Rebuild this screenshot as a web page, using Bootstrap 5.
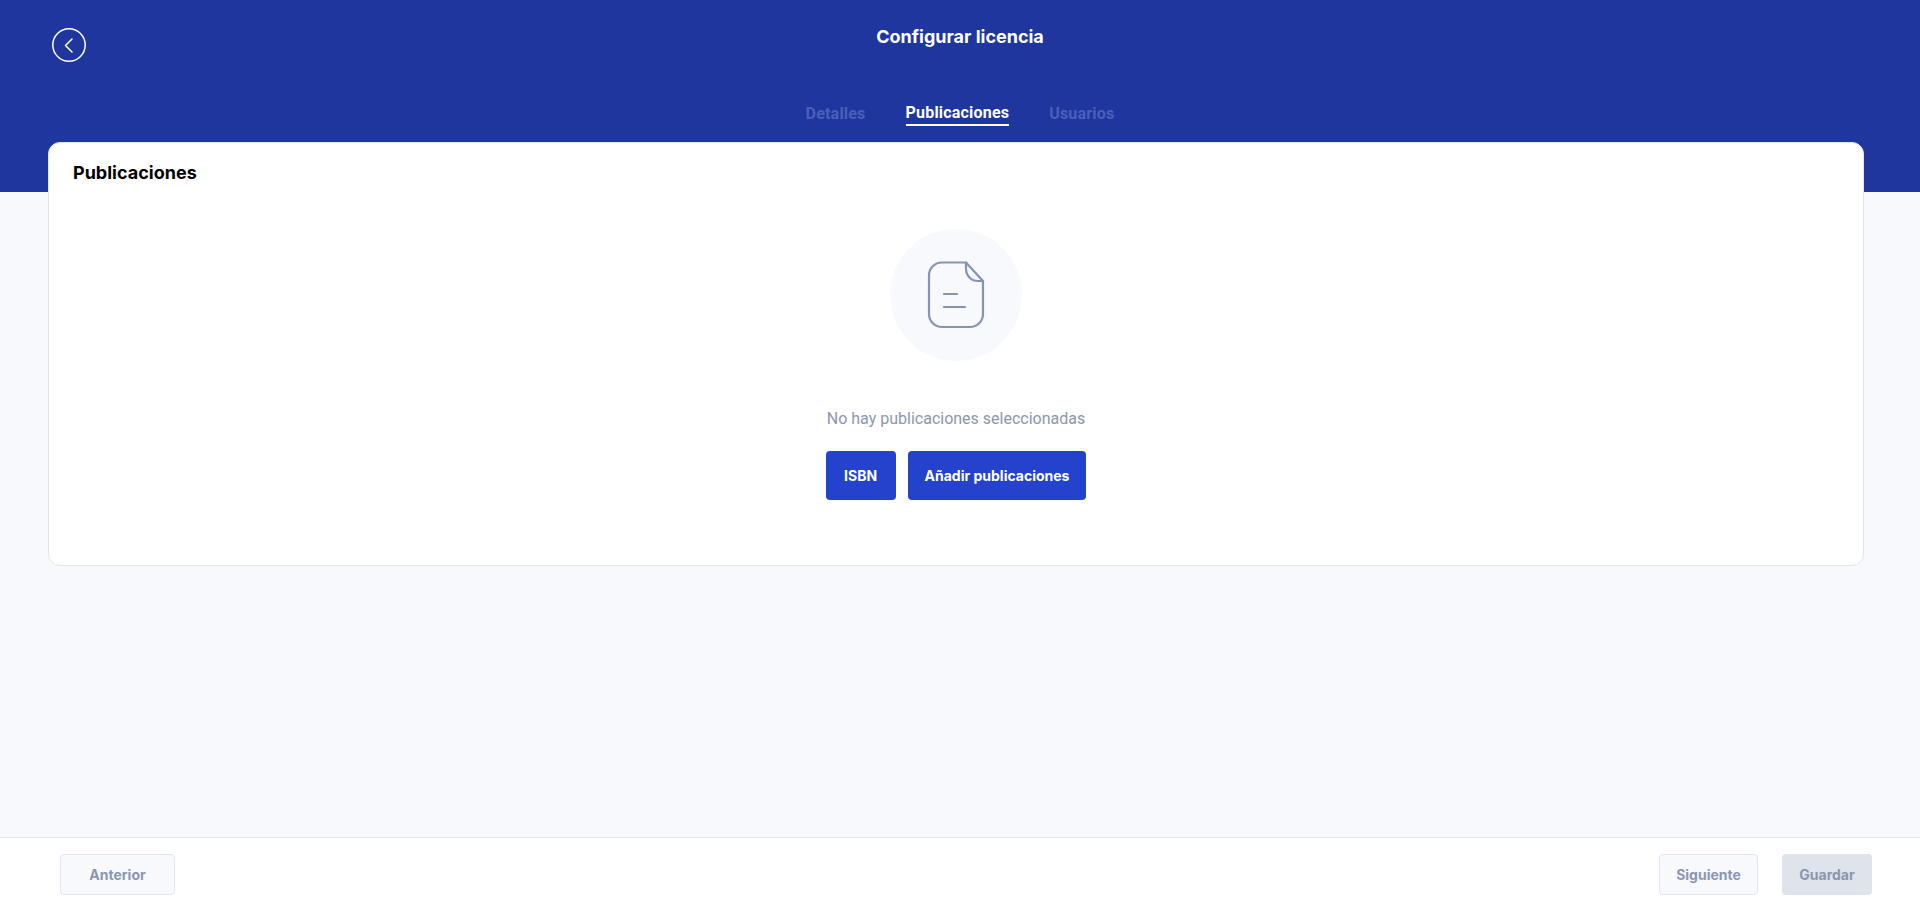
<!DOCTYPE html>
<html lang="es">
<head>
    <meta charset="UTF-8">
    <title>Configurar licencia</title>
    <link href="https://cdn.jsdelivr.net/npm/bootstrap@5.3.0/dist/css/bootstrap.min.css" rel="stylesheet">
    <style>
        html, body { height: 100%; }
        body { background: #f8f9fd; font-family: "Inter", "Liberation Sans", sans-serif; overflow: hidden; }
        .page-wrap { height: 910px; }
        .top-band { background: #1e369d; height: 192px; padding: 28px 52px 0; flex-shrink: 0; }
        .top-row { display: grid; grid-template-columns: 1fr auto 1fr; }
        .back-btn { width: 34px; height: 34px; border: 0; background: transparent; padding: 0; }
        .page-title { color: #fff; font-size: 18px; font-weight: 700; line-height: 22px; margin: -2px 0 0; }
        .tab-strip { gap: 40px; margin-top: 39px; }
        .tab-link { font-family: "Roboto", "Liberation Sans", sans-serif; font-size: 16px; font-weight: 700; letter-spacing: .2px; line-height: 20px; color: #4a60ba; text-decoration: none; padding: 3px 0 0; border-bottom: 2px solid transparent; }
        .tab-link.is-active { color: #fff; border-bottom-color: #fff; padding-top: 2px; padding-bottom: 1px; }
        .main-area { padding: 0 56px 0 48px; margin-top: -50px; flex: 1 1 auto; }
        .panel { background: #fff; border: 1px solid #e2e6ee; border-radius: 12px; height: 424px; padding: 19px 24px; }
        .panel-title { font-size: 18px; font-weight: 700; line-height: 22px; color: #000; margin: 0; }
        .empty-circle { width: 132px; height: 132px; border-radius: 50%; background: #f8f9fd; margin-top: 45px; }
        .empty-text { font-family: "Roboto", "Liberation Sans", sans-serif; font-size: 16px; line-height: 20px; color: #8b97ad; margin: 48px 0 22px; }
        .btn-blue { background: #2542cc; color: #fff; font-size: 14px; font-weight: 700; height: 49px; border: 0; border-radius: 4px; padding: 0 17px; }
        .btn-blue:hover { background: #2542cc; color: #fff; }
        .w-isbn { width: 70px; }
        .bottom-bar { background: #fff; border-top: 1px solid #e2e6ee; height: 73px; padding: 16px 48px 0 60px; flex-shrink: 0; }
        .btn-ghost, .btn-off { font-size: 14px; font-weight: 700; height: 41px; border-radius: 4px; color: #8b97ad; padding: 0; }
        .btn-ghost { background: #f8f9fd; border: 1px solid #e2e6ee; }
        .btn-off { background: #dfe3eb; border: 0; }
        .w-prev { width: 115px; }
        .w-next { width: 99px; }
        .w-save { width: 90px; }
    </style>
</head>
<body>
    <div class="page-wrap d-flex flex-column">
        <header class="top-band">
            <div class="top-row">
                <div>
                    <button type="button" class="back-btn d-block" aria-label="Volver">
                        <svg class="d-block" width="34" height="34" viewBox="0 0 34 34" fill="none" stroke="#fff" stroke-width="1.5" stroke-linecap="round" stroke-linejoin="round"><circle cx="17" cy="17" r="16.2"/><path d="M20 11 L13.5 17.5 L20 24"/></svg>
                    </button>
                </div>
                <h1 class="page-title">Configurar licencia</h1>
                <div></div>
            </div>
            <nav class="tab-strip d-flex justify-content-center">
                <a class="tab-link" href="#">Detalles</a>
                <a class="tab-link is-active" href="#">Publicaciones</a>
                <a class="tab-link" href="#">Usuarios</a>
            </nav>
        </header>

        <main class="main-area">
            <section class="panel">
                <h2 class="panel-title">Publicaciones</h2>
                <div class="d-flex flex-column align-items-center">
                    <div class="empty-circle d-flex align-items-center justify-content-center">
                        <svg width="58" height="68" viewBox="0 0 58 68" fill="none" stroke="#8595b0" stroke-width="2.2" stroke-linecap="round" stroke-linejoin="round">
                            <path d="M39 1.5 H15 A13 13 0 0 0 2 14.5 V53 A13 13 0 0 0 15 66 H43 A13 13 0 0 0 56 53 V20 Z"/>
                            <path d="M39 1.5 V8 A12 12 0 0 0 51 20 H56"/>
                            <path d="M17 33 H30"/>
                            <path d="M17 46 H38"/>
                        </svg>
                    </div>
                    <p class="empty-text">No hay publicaciones seleccionadas</p>
                    <div class="d-flex" style="gap:12px">
                        <button type="button" class="btn btn-blue w-isbn">ISBN</button>
                        <button type="button" class="btn btn-blue">Añadir publicaciones</button>
                    </div>
                </div>
            </section>
        </main>

        <footer class="bottom-bar d-flex justify-content-between align-items-start">
            <button type="button" class="btn btn-ghost w-prev">Anterior</button>
            <div class="d-flex" style="gap:24px">
                <button type="button" class="btn btn-ghost w-next">Siguiente</button>
                <button type="button" class="btn btn-off w-save">Guardar</button>
            </div>
        </footer>
    </div>
    <script src="https://cdn.jsdelivr.net/npm/bootstrap@5.3.0/dist/js/bootstrap.bundle.min.js"></script>
</body>
</html>
